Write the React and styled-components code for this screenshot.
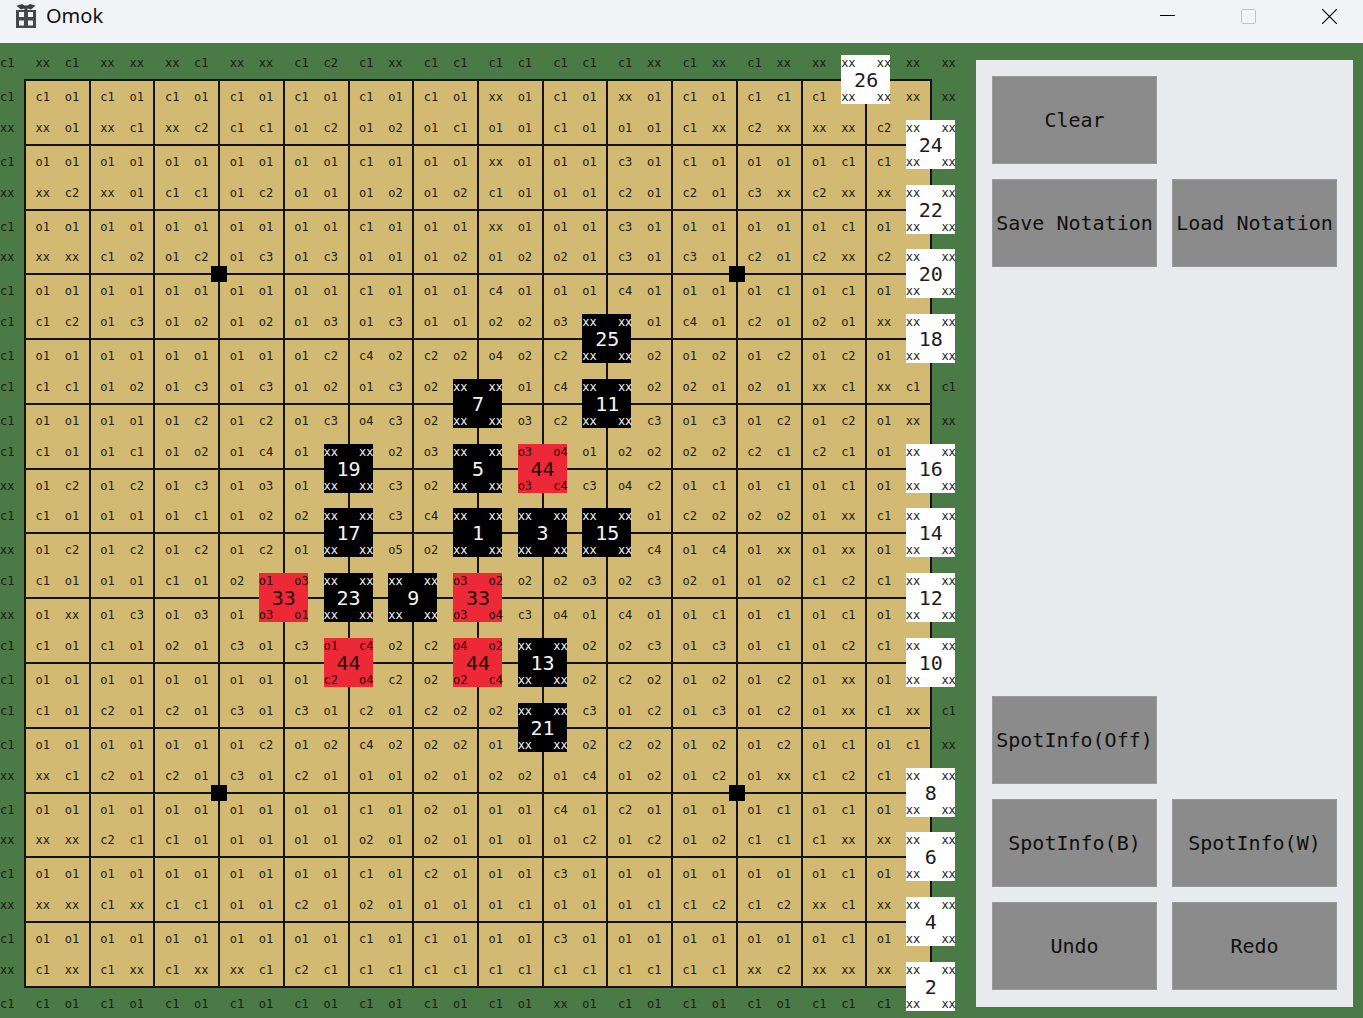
import React from "react";
import styled, { createGlobalStyle } from "styled-components";

const mono = '"DejaVu Sans Mono", "Liberation Mono", monospace';

const palette = {
  empty: { background: "transparent", color: "#1c1c10" },
  black: { background: "#000000", color: "#f4f4f4" },
  white: { background: "#ffffff", color: "#1c1c1c" },
  banned: { background: "#ed2938", color: "#2a0508" },
};

const GlobalStyle = createGlobalStyle`
  *, *::before, *::after { box-sizing: border-box; }
  body { margin: 0; background: #4a7a46; }
`;

const Window = styled.div`
  display: flex;
  flex-direction: column;
  min-height: 100vh;
  background: #4a7a46;
`;

const TitleBar = styled.header`
  display: flex;
  align-items: center;
  height: 43px;
  padding: 0 0 11px 16px;
  background: #f2f3f7;
`;

const Title = styled.h1`
  flex: 1;
  margin: 0 0 0 10px;
  font: 400 20px/24px "Noto Sans", "Open Sans", sans-serif;
  color: #101010;
`;

const WindowControls = styled.div`
  display: flex;
  gap: 14px;
`;

const ControlButton = styled.button`
  display: flex;
  align-items: center;
  justify-content: center;
  width: 67px;
  height: 32px;
  padding: 0;
  border: 0;
  background: transparent;
  color: #000000;

  &:disabled { color: #c2c3c8; }
`;

const Body = styled.main`
  flex: 1;
  display: flex;
  gap: 21px;
  padding-right: 10px;
`;

const Board = styled.section`
  flex: 1;
  display: grid;
  min-width: 735px;
  min-height: 735px;
  margin: 12px 0 7px;
`;

const Field = styled.div`
  grid-area: 1 / 1;
  display: grid;
  grid-template: repeat(14, 1fr) / repeat(14, 1fr);
  gap: 2px;
  margin: 24px 23px 23px 24px;
  border: 2px solid #14120a;
  background: #14120a;
`;

const Square = styled.div`
  background: #d2ba72;
`;

const Spots = styled.div`
  grid-area: 1 / 1;
  display: grid;
  grid-template: repeat(15, 49px) / repeat(15, 49px);
  place-content: space-between;
`;

const Spot = styled.div`
  display: grid;
  grid-template: 16px 1fr 15px / 25px 25px;
  background: ${({ $kind }) => palette[$kind].background};
  color: ${({ $kind }) => palette[$kind].color};
`;

const Hint = styled.span`
  font: 12px/17px ${mono};
  text-align: ${({ $side }) => $side};
`;

const Center = styled.div`
  grid-column: 1 / -1;
  display: flex;
  align-items: center;
  justify-content: center;
  font: 20px/18px ${mono};
`;

const StarPoint = styled.i`
  width: 16px;
  height: 16px;
  background: #000000;
`;

const Panel = styled.aside`
  display: flex;
  flex-direction: column;
  justify-content: space-between;
  width: 377px;
  margin: 17px 0 11px;
  padding: 16px 16px 17px;
  background: #e9eaee;
`;

const ButtonGroup = styled.div`
  display: grid;
  grid-template-columns: 1fr 1fr;
  gap: 15px;
`;

const ActionButton = styled.button`
  grid-column-start: ${({ $first }) => ($first ? 1 : "auto")};
  height: 88px;
  padding: 0;
  border: 1px solid #999999;
  background: #8b8b8b;
  color: #101010;
  font: 20px/24px ${mono};
  white-space: nowrap;
`;

/* Two lines per board row: the hints above and below each intersection. */
const hintRows = `
c1 xx c1 xx xx xx c1 xx xx c1 c2 c1 xx c1 c1 c1 c1 c1 c1 c1 xx c1 xx c1 xx xx xx xx xx xx
c1 c1 o1 c1 o1 c1 o1 c1 o1 c1 o1 c1 o1 c1 o1 xx o1 c1 o1 xx o1 c1 o1 c1 c1 c1 xx xx xx xx
xx xx o1 xx c1 xx c2 c1 c1 o1 c2 o1 o2 o1 c1 o1 o1 c1 o1 o1 o1 c1 xx c2 xx xx xx c2 xx xx
c1 o1 o1 o1 o1 o1 o1 o1 o1 o1 o1 c1 o1 o1 o1 xx o1 o1 o1 c3 o1 c1 o1 o1 o1 o1 c1 c1 xx xx
xx xx c2 xx o1 c1 c1 o1 c2 o1 o1 o1 o2 o1 o2 c1 o1 o1 o1 c2 o1 c2 o1 c3 xx c2 xx xx xx xx
c1 o1 o1 o1 o1 o1 o1 o1 o1 o1 o1 c1 o1 o1 o1 xx o1 o1 o1 c3 o1 o1 o1 o1 o1 o1 c1 o1 xx xx
xx xx xx c1 o2 o1 c2 o1 c3 o1 c3 o1 o1 o1 o2 o1 o2 o2 o1 c3 o1 c3 o1 c2 o1 c2 xx c2 xx xx
c1 o1 o1 o1 o1 o1 o1 o1 o1 o1 o1 c1 o1 o1 o1 c4 o1 o1 o1 c4 o1 o1 o1 o1 c1 o1 c1 o1 xx xx
c1 c1 c2 o1 c3 o1 o2 o1 o2 o1 o3 o1 c3 o1 o1 o2 o2 o3 xx xx o1 c4 o1 c2 o1 o2 o1 xx xx xx
c1 o1 o1 o1 o1 o1 o1 o1 o1 o1 c2 c4 o2 c2 o2 o4 o2 c2 xx xx o2 o1 o2 o1 c2 o1 c2 o1 xx xx
c1 c1 c1 o1 o2 o1 c3 o1 c3 o1 o2 o1 c3 o2 xx xx o1 c4 xx xx o2 o2 o1 o2 o1 xx c1 xx c1 c1
c1 o1 o1 o1 o1 o1 c2 o1 c2 o1 c3 o4 c3 o2 xx xx o3 c2 xx xx c3 o1 c3 o1 c2 o1 c2 o1 xx xx
c1 c1 o1 o1 c1 o1 o2 o1 c4 o1 xx xx o2 o3 xx xx o3 o4 o1 o2 o2 o2 o2 c2 c1 c2 c1 o1 xx xx
xx o1 c2 o1 c2 o1 c3 o1 o3 o1 xx xx c3 o2 xx xx o3 c4 c3 o4 c2 o1 c1 o1 c1 o1 c1 o1 xx xx
c1 c1 o1 o1 o1 o1 c1 o1 o2 o2 xx xx c3 c4 xx xx xx xx xx xx o1 c2 o2 o2 o2 o1 xx c1 xx xx
xx o1 c2 o1 c2 o1 c2 o1 c2 o1 xx xx o5 o2 xx xx xx xx xx xx c4 o1 c4 o1 xx o1 xx o1 xx xx
c1 c1 o1 o1 o1 c1 o1 o2 o1 o3 xx xx xx xx o3 o2 o2 o2 o3 o2 c3 o2 o1 o1 o2 c1 c2 c1 xx xx
xx o1 xx o1 c3 o1 o3 o1 o3 o1 xx xx xx xx o3 o4 c3 o4 o1 c4 o1 o1 c1 o1 c1 o1 c1 o1 xx xx
c1 c1 o1 c1 o1 o2 o1 c3 o1 c3 o1 c4 o2 c2 o4 o2 xx xx o2 o2 c3 o1 c3 o1 c1 o1 c2 c1 xx xx
c1 o1 o1 o1 o1 o1 o1 o1 o1 o1 c2 o4 c2 o2 o2 c4 xx xx o2 c2 o2 o1 o2 o1 c2 o1 xx o1 xx xx
c1 c1 o1 c2 o1 c2 o1 c3 o1 c3 o1 c2 o1 c2 o2 o2 xx xx c3 o1 c2 o1 c3 o1 c2 o1 xx c1 xx c1
c1 o1 o1 o1 o1 o1 o1 o1 c2 o1 o2 c4 o2 o2 o2 o1 xx xx o2 c2 o2 o1 o2 o1 c2 o1 c1 o1 c1 xx
xx xx c1 c2 o1 c2 o1 c3 o1 c2 o1 o1 o1 o2 o1 o2 o2 o1 c4 o1 o2 o1 c2 o1 xx c1 c2 c1 xx xx
c1 o1 o1 o1 o1 o1 o1 o1 o1 o1 o1 c1 o1 o2 o1 o1 o1 c4 o1 c2 o1 o1 o1 o1 c1 o1 c1 o1 xx xx
xx xx xx c2 c1 c1 o1 o1 o1 o1 o1 o2 o1 o2 o1 o1 o1 o1 c2 o1 c2 o1 o2 c1 c1 c1 xx xx xx xx
c1 o1 o1 o1 o1 o1 o1 o1 o1 o1 o1 c1 o1 c2 o1 o1 o1 c3 o1 o1 o1 o1 o1 o1 o1 o1 c1 o1 xx xx
xx xx xx c1 xx c1 c1 o1 o1 c2 o1 o2 o1 o1 o1 o1 c1 o1 o1 o1 c1 c1 c2 c1 c2 xx c1 xx xx xx
c1 o1 o1 o1 o1 o1 o1 o1 o1 o1 o1 c1 o1 c1 o1 o1 o1 c3 o1 o1 o1 o1 o1 o1 o1 o1 c1 o1 xx xx
xx c1 xx c1 xx c1 xx xx c1 c2 c1 c1 c1 c1 c1 c1 c1 c1 c1 c1 c1 c1 c1 xx c2 xx xx xx xx xx
c1 c1 o1 c1 o1 c1 o1 c1 o1 c1 o1 c1 o1 c1 o1 c1 o1 xx o1 c1 o1 c1 o1 c1 o1 c1 c1 c1 xx xx
`
  .trim()
  .split("\n")
  .map((line) => line.split(" "));

/* [row, column] of every move, in the order played. */
const moves = [
  [7, 7], [14, 14], [7, 8], [13, 14], [6, 7], [12, 14], [5, 7], [11, 14],
  [8, 6], [9, 14], [5, 9], [8, 14], [9, 8], [7, 14], [7, 9], [6, 14],
  [7, 5], [4, 14], [6, 5], [3, 14], [10, 8], [2, 14], [8, 5], [1, 14],
  [4, 9], [0, 13],
];

const marks = {
  "6,8": { kind: "banned", label: "44" },
  "8,4": { kind: "banned", label: "33" },
  "8,7": { kind: "banned", label: "33" },
  "9,5": { kind: "banned", label: "44" },
  "9,7": { kind: "banned", label: "44" },
};

moves.forEach(([row, col], i) => {
  marks[`${row},${col}`] = { kind: i % 2 ? "white" : "black", label: i + 1 };
});

const starLines = [3, 11];

const spots = Array.from({ length: 225 }, (_, i) => {
  const row = Math.floor(i / 15);
  const col = i % 15;
  const mark = marks[`${row},${col}`];
  return {
    id: `${row},${col}`,
    kind: mark ? mark.kind : "empty",
    label: mark ? mark.label : null,
    star: !mark && starLines.includes(row) && starLines.includes(col),
    above: hintRows[row * 2].slice(col * 2, col * 2 + 2),
    below: hintRows[row * 2 + 1].slice(col * 2, col * 2 + 2),
  };
});

function GiftIcon() {
  return (
    <svg width="20" height="25" viewBox="0 0 20 25" aria-hidden="true">
      <path d="M0.5 1.8 L6 0 L8.5 1.5 H11.5 L14 0 L19.5 1.8 L15 5.4 L11.5 4.6 V6 H8.5 V4.6 L5 5.4 Z" fill="#3f3f3f" />
      <path d="M0 6 H20 V24 H0 Z" fill="#474747" />
      <path d="M3 8 H8 V13 H3 Z M12 8 H17 V13 H12 Z M3 16.5 H8 V21.5 H3 Z M12 16.5 H17 V21.5 H12 Z" fill="#f2f3f7" />
    </svg>
  );
}

export default function App() {
  return (
    <Window>
      <GlobalStyle />
      <TitleBar>
        <GiftIcon />
        <Title>Omok</Title>
        <WindowControls>
          <ControlButton type="button" aria-label="Minimize">
            <svg width="15" height="15" viewBox="0 0 15 15">
              <path d="M0 6.5 H15" stroke="currentColor" />
            </svg>
          </ControlButton>
          <ControlButton type="button" aria-label="Maximize" disabled>
            <svg width="15" height="15" viewBox="0 0 15 15">
              <rect x="0.5" y="0.5" width="14" height="14" rx="1" fill="none" stroke="currentColor" />
            </svg>
          </ControlButton>
          <ControlButton type="button" aria-label="Close">
            <svg width="15" height="15" viewBox="0 0 15 15">
              <path d="M0 0 L15 15 M15 0 L0 15" stroke="currentColor" strokeWidth="1.2" />
            </svg>
          </ControlButton>
        </WindowControls>
      </TitleBar>
      <Body>
        <Board aria-label="Board">
          <Field>
            {Array.from({ length: 196 }, (_, i) => (
              <Square key={i} />
            ))}
          </Field>
          <Spots>
            {spots.map((spot) => (
              <Spot key={spot.id} $kind={spot.kind}>
                <Hint $side="left">{spot.above[0]}</Hint>
                <Hint $side="right">{spot.above[1]}</Hint>
                <Center>{spot.star ? <StarPoint /> : spot.label}</Center>
                <Hint $side="left">{spot.below[0]}</Hint>
                <Hint $side="right">{spot.below[1]}</Hint>
              </Spot>
            ))}
          </Spots>
        </Board>
        <Panel>
          <ButtonGroup>
            <ActionButton type="button">Clear</ActionButton>
            <ActionButton type="button" $first>Save Notation</ActionButton>
            <ActionButton type="button">Load Notation</ActionButton>
          </ButtonGroup>
          <ButtonGroup>
            <ActionButton type="button">SpotInfo(Off)</ActionButton>
            <ActionButton type="button" $first>SpotInfo(B)</ActionButton>
            <ActionButton type="button">SpotInfo(W)</ActionButton>
            <ActionButton type="button">Undo</ActionButton>
            <ActionButton type="button">Redo</ActionButton>
          </ButtonGroup>
        </Panel>
      </Body>
    </Window>
  );
}
